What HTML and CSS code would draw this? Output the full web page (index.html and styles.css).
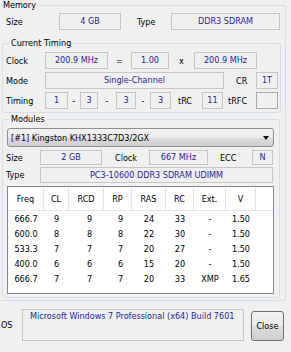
FILE: index.html
```html
<!DOCTYPE html>
<html lang="en">
<head>
    <meta charset="UTF-8">
    <title>Memory</title>
    <link rel="stylesheet" href="styles.css">
</head>
<body>
    <div class="tab">
        <fieldset class="group memory">
            <legend>Memory</legend>
            <div class="row mem-row">
                <span class="lbl l-size">Size</span>
                <span class="fld f-size">4 GB</span>
                <span class="lbl l-type">Type</span>
                <span class="fld f-type">DDR3 SDRAM</span>
            </div>

            <fieldset class="group timing">
                <legend>Current Timing</legend>
                <div class="row t-row">
                    <span class="lbl l-t">Clock</span>
                    <span class="fld f-clock">200.9 MHz</span>
                    <span class="sep s-eq">=</span>
                    <span class="fld f-mult">1.00</span>
                    <span class="sep s-x">x</span>
                    <span class="fld f-clock">200.9 MHz</span>
                </div>
                <div class="row t-row">
                    <span class="lbl l-t">Mode</span>
                    <span class="fld f-mode">Single-Channel</span>
                    <span class="lbl l-cr">CR</span>
                    <span class="fld f-small">1T</span>
                </div>
                <div class="row t-row">
                    <span class="lbl l-t">Timing</span>
                    <span class="fld f-t1">1</span>
                    <span class="sep s-d1">-</span>
                    <span class="fld f-t2">3</span>
                    <span class="sep s-d2">-</span>
                    <span class="fld f-t3">3</span>
                    <span class="sep s-d3">-</span>
                    <span class="fld f-t4">3</span>
                    <span class="lbl l-trc">tRC</span>
                    <span class="fld f-t4">11</span>
                    <span class="lbl l-trfc">tRFC</span>
                    <span class="fld f-small f-empty"></span>
                </div>
            </fieldset>

            <fieldset class="group modules">
                <legend>Modules</legend>
                <div class="combo">
                    <span>[#1] Kingston KHX1333C7D3/2GX</span>
                    <span class="arrow"></span>
                </div>
                <div class="row m-row">
                    <span class="lbl l-m">Size</span>
                    <span class="fld f-msize">2 GB</span>
                    <span class="lbl l-clock">Clock</span>
                    <span class="fld f-mclock">667 MHz</span>
                    <span class="lbl l-ecc">ECC</span>
                    <span class="fld f-ecc">N</span>
                </div>
                <div class="row m-row m-type">
                    <span class="lbl l-m">Type</span>
                    <span class="fld f-mtype">PC3-10600 DDR3 SDRAM UDIMM</span>
                </div>

                <div class="spd">
                    <div class="spd-head">
                        <span>Freq</span><span>CL</span><span>RCD</span><span>RP</span><span>RAS</span><span>RC</span><span>Ext.</span><span>V</span><span></span>
                    </div>
                    <div class="spd-body">
                        <div class="spd-row"><span>666.7</span><span>9</span><span>9</span><span>9</span><span>24</span><span>33</span><span>-</span><span>1.50</span></div>
                        <div class="spd-row"><span>600.0</span><span>8</span><span>8</span><span>8</span><span>22</span><span>30</span><span>-</span><span>1.50</span></div>
                        <div class="spd-row"><span>533.3</span><span>7</span><span>7</span><span>7</span><span>20</span><span>27</span><span>-</span><span>1.50</span></div>
                        <div class="spd-row"><span>400.0</span><span>6</span><span>6</span><span>6</span><span>15</span><span>20</span><span>-</span><span>1.50</span></div>
                        <div class="spd-row"><span>666.7</span><span>7</span><span>7</span><span>7</span><span>20</span><span>33</span><span>XMP</span><span>1.65</span></div>
                    </div>
                </div>
            </fieldset>
        </fieldset>
    </div>

    <div class="footer">
        <span class="os-lbl">OS</span>
        <div class="os-fld">Microsoft Windows 7 Professional (x64) Build 7601</div>
        <button class="close">Close</button>
    </div>
</body>
</html>
```

FILE: styles.css
```css
* {
    box-sizing: border-box;
}
body {
    margin: 0;
    width: 291px;
    height: 352px;
    overflow: hidden;
    background-color: #f0f0f0;
    font-family: "DejaVu Sans Condensed", "DejaVu Sans", sans-serif;
    font-stretch: condensed;
    font-size: 9px;
    color: #000;
}
.tab {
    height: 303px;
}

/* group boxes */
.group {
    margin: 0;
    padding: 0;
    min-width: 0;
    border: 1px solid #d5dfe5;
    border-radius: 3px;
}
.group legend {
    padding: 0 2px;
    height: 13px;
    line-height: 13px;
}
.memory {
    margin: -1px 5px 0 0;
    padding: 1px 0 2px 2px;
    border-left: 0;
    border-radius: 0 3px 3px 0;
}
.memory > legend {
    padding: 0 1px;
}
.timing {
    margin: 7px 4px 0 0;
    padding: 2px 0 3px 0;
}
.timing legend,
.modules legend {
    margin-left: 6px;
}
.modules {
    margin: 0 5px 0 0;
    padding: 2px 0 3px 0;
}

/* rows and fields */
.row {
    display: flex;
    align-items: center;
}
.lbl, .sep, .fld {
    flex: none;
    white-space: nowrap;
}
.sep {
    text-align: center;
}
.fld {
    height: 17px;
    line-height: 15px;
    border: 1px solid #c6c6c6;
    text-align: center;
    color: #1f1f9a;
    overflow: hidden;
}
.mem-row {
    height: 17px;
    padding-left: 4px;
}
.l-size { width: 53px; }
.f-size { width: 62px; }
.l-type { width: 50px; padding-left: 16px; }
.f-type { width: 109px; }

.t-row {
    height: 17px;
    padding-left: 3px;
}
.t-row + .t-row {
    margin-top: 3px;
}
.l-t { width: 39px; }
.f-clock { width: 63px; }
.s-eq { width: 23px; }
.f-mult { width: 38px; }
.s-x { width: 25px; }
.f-mode { width: 179px; }
.l-cr { width: 32px; padding-left: 12px; }
.f-small { width: 22px; }
.f-empty { border-color: #a9a9a9; }
.f-t1 { width: 23px; }
.s-d1 { width: 12px; }
.f-t2 { width: 18px; }
.s-d2 { width: 18px; }
.f-t3 { width: 20px; }
.s-d3 { width: 14px; }
.f-t4 { width: 21px; }
.l-trc { width: 31px; padding-left: 7px; }
.l-trfc { width: 33px; padding-left: 5px; }

/* modules */
.combo {
    margin-left: 4px;
    width: 267px;
    height: 19px;
    padding: 0 3px 0 3px;
    border: 1px solid #8e8f8f;
    border-radius: 3px;
    background: linear-gradient(#f2f2f2, #ebebeb 50%, #dddddd 50%, #cfcfcf);
    display: flex;
    align-items: center;
    justify-content: space-between;
}
.arrow {
    width: 0;
    height: 0;
    border-left: 3px solid transparent;
    border-right: 3px solid transparent;
    border-top: 4px solid #000;
    margin-right: 1px;
}
.m-row {
    height: 15px;
    margin-top: 3px;
    padding-left: 3px;
}
.m-row .fld {
    height: 15px;
    line-height: 13px;
}
.m-row.m-type {
    height: 16px;
    margin-top: 2px;
}
.m-type .fld {
    height: 16px;
    line-height: 14px;
}
.l-m { width: 34px; }
.f-msize { width: 62px; }
.l-clock { width: 47px; padding-left: 13px; }
.f-mclock { width: 59px; }
.l-ecc { width: 44px; padding-left: 12px; }
.f-ecc { width: 21px; }
.f-mtype { width: 233px; }

/* spd table */
.spd {
    margin: 3px 0 0 4px;
    width: 267px;
    height: 108px;
    border: 1px solid #828790;
    background-color: #fff;
}
.spd-head, .spd-row {
    display: grid;
    grid-template-columns: 36px 25px 35px 28px 34px 28px 32px 30px 1fr;
}
.spd-head {
    height: 24px;
    padding-top: 2px;
    line-height: 21px;
    border-bottom: 1px solid #e5e5e5;
}
.spd-head span {
    text-align: center;
    border-right: 1px solid #e5e5e5;
    margin-top: -2px;
    padding-top: 2px;
}
.spd-head span:last-child {
    border-right: 0;
}
.spd-body {
    padding-top: 1px;
}
.spd-row {
    height: 15px;
    line-height: 15px;
}
.spd-row span {
    text-align: center;
}
.spd-row span:nth-child(3) { padding-left: 6px; }
.spd-row span:nth-child(4) { padding-left: 5px; }

/* footer */
.footer {
    display: flex;
    align-items: flex-start;
    padding-top: 7px;
}
.os-lbl {
    width: 22px;
    padding-left: 1px;
    line-height: 32px;
}
.os-fld {
    width: 222px;
    height: 32px;
    padding-left: 7px;
    line-height: 12px;
    border: 1px solid #c6c6c6;
    color: #1f1f9a;
    white-space: nowrap;
}
.close {
    margin: 2px 0 0 7px;
    width: 33px;
    height: 30px;
    padding: 0;
    font: inherit;
    color: #000;
    border: 1px solid #707070;
    border-radius: 3px;
    background: linear-gradient(#f2f2f2, #ebebeb 50%, #dddddd 50%, #cfcfcf);
}
```
